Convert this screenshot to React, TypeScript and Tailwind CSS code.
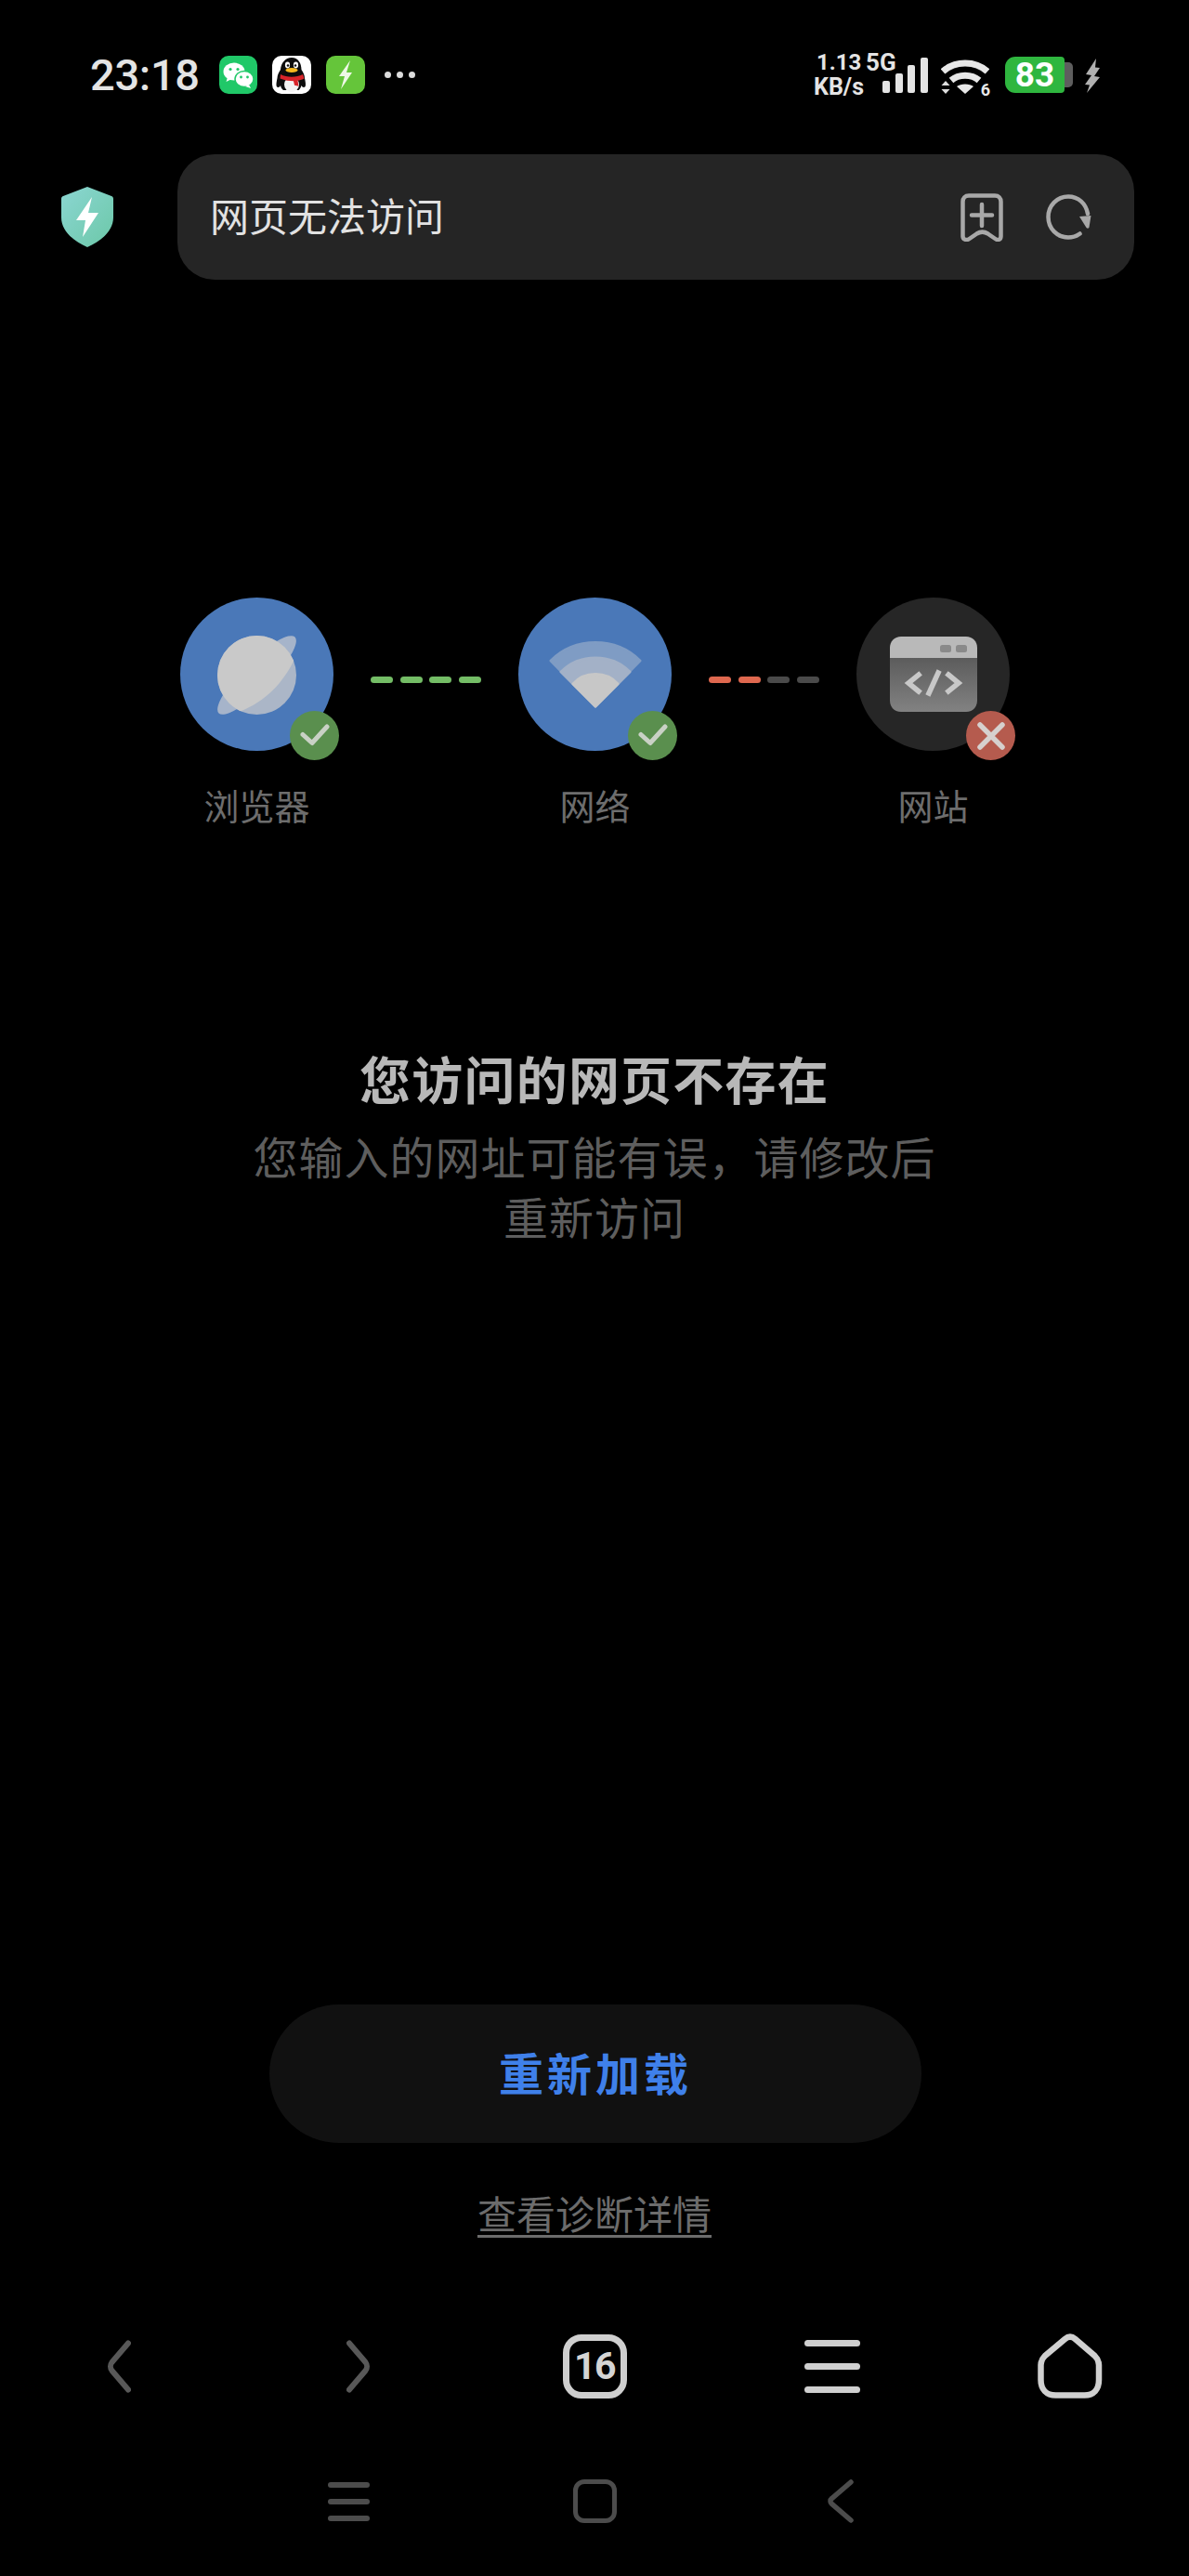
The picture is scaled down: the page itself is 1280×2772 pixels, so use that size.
import React from "react";

const cjk = "font-['Noto_Sans_CJK_SC','Noto_Sans',sans-serif]";
const num = "font-['Roboto','Inter',sans-serif]";

function WeChat() {
  return (
    <svg width="41" height="41" viewBox="0 0 41 41">
      <rect width="41" height="41" rx="10" fill="#20c868" />
      <ellipse cx="16" cy="17" rx="11.5" ry="9.5" fill="#ffffff" />
      <path d="M9 23l-1.5 5 6-3z" fill="#ffffff" />
      <ellipse cx="27" cy="25" rx="10" ry="8.5" fill="#ffffff" stroke="#20c868" strokeWidth="1.5" />
      <path d="M32 31l2 4-6-2z" fill="#ffffff" />
      <circle cx="12" cy="14.5" r="1.6" fill="#20c868" />
      <circle cx="20" cy="14.5" r="1.6" fill="#20c868" />
      <circle cx="23.5" cy="23" r="1.4" fill="#20c868" />
      <circle cx="30.5" cy="23" r="1.4" fill="#20c868" />
    </svg>
  );
}

function QQ() {
  return (
    <svg width="42" height="41" viewBox="0 0 42 41">
      <rect width="42" height="41" rx="10" fill="#ffffff" />
      <path d="M21 2c7 0 10.500 6 10.500 13 2 3 3.500 6 3.500 9 1 5 2 10-1 10-1 0-2-1-2.500-2-1 3-2 4-3 5H12c-1-1-2.500-2-3-5-.5 1-1.500 2-2.500 2-3 0-2-5-1-10 0-3 1.500-6 3.500-9C9.500 8 14 2 21 2z" fill="#0d0d0d" />
      <ellipse cx="21" cy="31" rx="8" ry="8" fill="#f4f4f4" />
      <ellipse cx="16.500" cy="10" rx="2.600" ry="3.400" fill="#ffffff" />
      <ellipse cx="25.500" cy="10" rx="2.600" ry="3.400" fill="#ffffff" />
      <circle cx="17" cy="10.500" r="1.300" fill="#111111" />
      <circle cx="25" cy="10.500" r="1.300" fill="#111111" />
      <ellipse cx="21" cy="15.500" rx="6.500" ry="2.600" fill="#f5b81f" />
      <path d="M9 20c7 3.500 17 3.500 24 0l1.500 4.500c-3 1.500-5 2-7 2.200l1 6-4.500-1-1-4.500c-4 0-9.500-.5-14.500-2.700z" fill="#d8242a" />
    </svg>
  );
}

function Juice() {
  return (
    <svg width="42" height="41" viewBox="0 0 42 41">
      <rect width="42" height="41" rx="10" fill="#65c53a" />
      <path d="M26 5L14 22h6l-4 14 12-18h-6z" fill="#eef8e6" />
    </svg>
  );
}

function Signal() {
  return (
    <svg width="50" height="38" viewBox="0 0 50 38" className="block">
      <rect x="0" y="25" width="8" height="13" rx="2" fill="#e4e4e4" />
      <rect x="14" y="17" width="8" height="21" rx="2" fill="#e4e4e4" />
      <rect x="27" y="8" width="8" height="30" rx="2" fill="#e4e4e4" />
      <rect x="41" y="0" width="8" height="38" rx="2" fill="#e4e4e4" />
    </svg>
  );
}

function Wifi() {
  return (
    <div className="relative w-[52px] h-[38px]">
      <svg width="52" height="38" viewBox="0 0 52 38" className="block">
        <path d="M2 13C15 1 37 1 50 13" fill="none" stroke="#e8e8e8" strokeWidth="7" />
        <path d="M11 22.500C19 15.500 33 15.500 41 22.500" fill="none" stroke="#e8e8e8" strokeWidth="7" />
        <path d="M17 29c4-3.500 14-3.500 18 0l-9 8z" fill="#e8e8e8" />
        <path d="M5 23l-4.500 5h9z" fill="#dddddd" />
        <path d="M5 37l-4.500-5h9z" fill="#dddddd" />
      </svg>
      <span className={`absolute right-[-1px] bottom-[-3px] text-[18px] leading-[17px] font-bold text-[#e8e8e8] ${num}`}>6</span>
    </div>
  );
}

function Battery() {
  return (
    <div className="flex items-center">
      <div className={`w-[64px] h-[39px] rounded-l-[11px] rounded-r-[4px] bg-[#2fb63f] flex items-center justify-center text-[37px] leading-none font-bold text-white ${num}`}>83</div>
      <div className="w-[9px] h-[27px] rounded-r-[5px] bg-[#5e5e5e]" />
    </div>
  );
}

function StatusBolt() {
  return (
    <svg width="18" height="37" viewBox="0 0 18 37" className="block">
      <path d="M13 0L2 17l6 1-7 10 5 .5L3 37l14-17-6-1 6-9-5-.500z" fill="#b0b0b0" />
    </svg>
  );
}

function StatusBar() {
  return (
    <div className="h-[166px] pt-[60px] pl-[97px] flex items-start">
      <span className={`w-[139px] h-[41px] text-[47px] leading-[41px] font-medium text-[#e4e4e4] tracking-[-0.3px] ${num}`}>23:18</span>
      <div className="flex items-center gap-[16px]">
        <WeChat />
        <QQ />
        <Juice />
      </div>
      <div className="ml-[21px] h-[41px] flex items-center gap-[6px]">
        <span className="w-[7px] h-[7px] rounded-full bg-[#dcdcdc]" />
        <span className="w-[7px] h-[7px] rounded-full bg-[#dcdcdc]" />
        <span className="w-[7px] h-[7px] rounded-full bg-[#dcdcdc]" />
      </div>
      <div className="ml-[426px] -mt-[5px] w-[70px] flex flex-col items-start">
        <div className={`w-[96px] flex text-[24px] leading-[24px] font-bold text-[#e4e4e4] pl-[6px] ${num}`}>
          <span className="w-[53px]">1.13</span>
          <span className="text-[26px]">5G</span>
        </div>
        <span className={`text-[25px] leading-[24px] ml-[3px] mt-[3px] font-bold text-[#e4e4e4] ${num}`}>KB/s</span>
      </div>
      <div className="ml-[7px] mt-[2px]"><Signal /></div>
      <div className="ml-[13px] mt-[4px]"><Wifi /></div>
      <div className="ml-[17px] mt-[1px]"><Battery /></div>
      <div className="ml-[12px] mt-[3px]"><StatusBolt /></div>
    </div>
  );
}

function Shield() {
  return (
    <svg width="56" height="65" viewBox="0 0 56 65" className="block">
      <defs>
        <linearGradient id="shieldFill" x1="0" y1="0" x2="1" y2="1">
          <stop offset="0" stopColor="#8bd6d2" />
          <stop offset="1" stopColor="#6cc8a8" />
        </linearGradient>
      </defs>
      <path d="M28 0l26 10c1.500.5 2 1.500 2 3v20c0 15-14 26-28 32C14 59 0 48 0 33V13c0-1.500.5-2.500 2-3z" fill="url(#shieldFill)" />
      <path d="M33 11L16 36h10l-3 18 17-26H29z" fill="#ffffff" />
    </svg>
  );
}

function Bookmark() {
  return (
    <svg width="46" height="52" viewBox="0 0 46 52" className="block">
      <path d="M9 2.500h28c4 0 6.500 2.500 6.500 6.500v37c0 4-3 5-6 3l-8-5.500c-4-2.500-8-2.500-12 0L9.500 49c-3 2-7 1-7-3V9c0-4 2.500-6.500 6.500-6.500z" fill="none" stroke="#a8a8a8" strokeWidth="4.500" strokeLinejoin="round" />
      <path d="M23 12v23M12 23.500h22" fill="none" stroke="#a8a8a8" strokeWidth="4.500" strokeLinecap="round" />
    </svg>
  );
}

function Reload() {
  return (
    <svg width="49" height="49" viewBox="0 0 49 49" className="block">
      <path d="M45 21C43 10 35 2.500 24 2.500 12 2.500 2.500 12 2.500 24.500S12 46.500 24 46.500c5 0 9-1.500 12.500-4" fill="none" stroke="#a8a8a8" strokeWidth="4.500" strokeLinecap="round" />
      <path d="M36 24l12.500-1-2 12.500c-.5 1.500-2 1.500-3 .5z" fill="#a8a8a8" />
    </svg>
  );
}

function Header() {
  return (
    <div className="h-[135px] flex items-center pl-[66px]">
      <Shield />
      <div className="ml-[69px] w-[1030px] h-[135px] rounded-[40px] bg-[#252525] flex items-center pl-[35px]">
        <span className={`w-[808px] pb-[6px] text-[42px] leading-[60px] text-[#e2e2e2] ${cjk}`}>网页无法访问</span>
        <Bookmark />
        <div className="ml-[46px]"><Reload /></div>
      </div>
    </div>
  );
}

function Planet() {
  return (
    <svg width="90" height="90" viewBox="0 0 90 90" className="block">
      <defs>
        <clipPath id="planetClip">
          <circle cx="44.500" cy="45.500" r="42.500" />
        </clipPath>
      </defs>
      <ellipse cx="44.500" cy="45.500" rx="58" ry="15" transform="rotate(-45 44.500 45.500)" fill="#a6b4ca" />
      <circle cx="44.500" cy="45.500" r="42.500" fill="#abb6c7" />
      <path d="M0 0H90V18C76 50 58 74 18 88H0z" fill="#c9c9c9" clipPath="url(#planetClip)" />
    </svg>
  );
}

function WifiArt() {
  return (
    <svg width="104" height="73" viewBox="0 0 104 73" className="block">
      <path d="M4 22C30-4 74-4 100 22L52 71z" fill="#7f9cc4" stroke="#7f9cc4" strokeWidth="3" strokeLinejoin="round" />
      <path d="M15 34C35 14 69 14 89 34L52 71z" fill="#a3b1c7" stroke="#a3b1c7" strokeWidth="3" strokeLinejoin="round" />
      <path d="M28 47C40 33 64 33 76 47L52 71z" fill="#c7c7c7" stroke="#c7c7c7" strokeWidth="3" strokeLinejoin="round" />
    </svg>
  );
}

function Site() {
  return (
    <svg width="94" height="81" viewBox="0 0 94 81" className="block">
      <defs>
        <linearGradient id="siteBody" x1="0" y1="0" x2="0" y2="1">
          <stop offset="0" stopColor="#5c5c5c" />
          <stop offset="1" stopColor="#828282" />
        </linearGradient>
      </defs>
      <path d="M0 23h94v46c0 7-5 12-12 12H12C5 81 0 76 0 69z" fill="url(#siteBody)" />
      <path d="M12 0h70c7 0 12 5 12 12v11H0V12C0 5 5 0 12 0z" fill="#b9b9b9" />
      <rect x="54" y="9" width="12" height="8" rx="2.500" fill="#8a8a8a" />
      <rect x="71" y="9" width="12" height="8" rx="2.500" fill="#8a8a8a" />
      <path d="M31 41L20 50l11 9M63 41l11 9-11 9" fill="none" stroke="#c8c8c8" strokeWidth="5.500" strokeLinecap="square" />
      <path d="M52 39L42 61" fill="none" stroke="#c8c8c8" strokeWidth="5.500" strokeLinecap="square" />
    </svg>
  );
}

function OkBadge() {
  return (
    <div className="absolute left-[118px] top-[122px] w-[53px] h-[53px] rounded-full bg-[#5a8f4e] flex items-center justify-center">
      <svg width="32" height="26" viewBox="0 0 32 26" className="block">
        <path d="M3 11.500l10 9L29 3" fill="none" stroke="#c9d1c5" strokeWidth="5" strokeLinecap="round" strokeLinejoin="round" />
      </svg>
    </div>
  );
}

function FailBadge() {
  return (
    <div className="absolute left-[118px] top-[122px] w-[53px] h-[53px] rounded-full bg-[#b55b4e] flex items-center justify-center">
      <svg width="30" height="30" viewBox="0 0 30 30" className="block">
        <path d="M3 3l24 24M27 3L3 27" fill="none" stroke="#d6d0ce" strokeWidth="5.500" strokeLinecap="round" />
      </svg>
    </div>
  );
}

function Step({ label, bg, art, badge }: { label: string; bg: string; art: React.ReactNode; badge: React.ReactNode }) {
  return (
    <div className="w-[165px] flex flex-col items-center">
      <div className={`relative w-[165px] h-[165px] rounded-full flex items-center justify-center ${bg}`}>
        {art}
        {badge}
      </div>
      <span className={`mt-[34px] text-[38px] leading-[48px] text-[#6d6d6d] ${cjk}`}>{label}</span>
    </div>
  );
}

function Dashes({ colors }: { colors: string[] }) {
  return (
    <div className="w-[119px] mx-[40px] mt-[85px] h-[7px] flex justify-between">
      {colors.map((c, i) => (
        <span key={i} className={`w-[24px] h-[7px] rounded-full ${c}`} />
      ))}
    </div>
  );
}

function Steps() {
  return (
    <div className="mt-[342px] pl-[194px] flex items-start">
      <Step label="浏览器" bg="bg-[#4a78b8]" art={<Planet />} badge={<OkBadge />} />
      <Dashes colors={["bg-[#74bd66]", "bg-[#74bd66]", "bg-[#74bd66]", "bg-[#74bd66]"]} />
      <Step label="网络" bg="bg-[#4a78b8]" art={<WifiArt />} badge={<OkBadge />} />
      <Dashes colors={["bg-[#df684f]", "bg-[#df684f]", "bg-[#4a4a4a]", "bg-[#4a4a4a]"]} />
      <Step label="网站" bg="bg-[#262626]" art={<Site />} badge={<FailBadge />} />
    </div>
  );
}

function Toolbar() {
  return (
    <div className="mt-[105px] h-[70px] grid grid-cols-5 items-center justify-items-center">
      <svg width="26" height="57" viewBox="0 0 26 57" className="block">
        <path d="M23 3.500L5.500 24c-2 2.500-2 6.500 0 9L23 53.500" fill="none" stroke="#585858" strokeWidth="6" strokeLinecap="round" />
      </svg>
      <svg width="26" height="57" viewBox="0 0 26 57" className="block ml-[3px]">
        <path d="M3 3.500L20.500 24c2 2.500 2 6.500 0 9L3 53.500" fill="none" stroke="#585858" strokeWidth="6" strokeLinecap="round" />
      </svg>
      <div className={`w-[69px] h-[69px] rounded-[20px] border-[7px] border-[#cfcfcf] flex items-center justify-center text-[41px] leading-none font-bold tracking-[-1.5px] text-[#d4d4d4] ${num}`}>16</div>
      <div className="w-[60px] flex flex-col gap-[18px]">
        <span className="h-[7px] rounded-full bg-[#cfcfcf]" />
        <span className="h-[7px] rounded-full bg-[#cfcfcf]" />
        <span className="h-[7px] rounded-full bg-[#cfcfcf]" />
      </div>
      <svg width="70" height="70" viewBox="0 0 70 70" className="block">
        <path d="M29.500 6L8 24c-3 3-4.500 6-4.500 10v16c0 10 6 16.500 16 16.500h31c10 0 15.500-6.500 15.500-16.500V34c0-4-1.500-7-4.500-10L40.500 6c-3.500-3-7.500-3-11 0z" fill="none" stroke="#d0d0d0" strokeWidth="6.500" strokeLinejoin="round" />
      </svg>
    </div>
  );
}

function SystemNav() {
  return (
    <div className="mt-[87px] mx-auto w-[795px] h-[47px] grid grid-cols-3 items-center justify-items-center">
      <div className="w-[45px] flex flex-col gap-[12px]">
        <span className="h-[6px] rounded-full bg-[#4c4c4c]" />
        <span className="h-[6px] rounded-full bg-[#4c4c4c]" />
        <span className="h-[6px] rounded-full bg-[#4c4c4c]" />
      </div>
      <div className="w-[47px] h-[47px] rounded-[12px] border-[5px] border-[#4c4c4c]" />
      <svg width="28" height="47" viewBox="0 0 28 47" className="block">
        <path d="M25 3L4.500 20.500c-2 1.500-2 4.500 0 6L25 44" fill="none" stroke="#4c4c4c" strokeWidth="5.500" strokeLinecap="round" />
      </svg>
    </div>
  );
}

export default function App() {
  return (
    <div className="w-[1280px] h-[2772px] bg-black flex flex-col overflow-hidden">
      <StatusBar />
      <Header />
      <Steps />
      <h1 className={`mt-[237px] text-center text-[55px] leading-[64px] font-bold tracking-[1.2px] text-[#b8b8b8] ${cjk}`}>您访问的网页不存在</h1>
      <p className={`mt-[20px] mx-auto w-[760px] text-center text-[48px] leading-[65px] tracking-[1px] text-[#5e5e5e] ${cjk}`}>您输入的网址可能有误，请修改后重新访问</p>
      <div className={`mt-[816px] ml-[290px] w-[702px] h-[149px] pb-[5px] rounded-full bg-[#111111] flex items-center justify-center text-[48px] font-bold tracking-[4px] text-[#3f80ea] ${cjk}`}>重新加载</div>
      <div className={`mt-[50px] text-center text-[42px] leading-[50px] text-[#6c6c6c] underline decoration-[3px] underline-offset-[6px] ${cjk}`}>查看诊断详情</div>
      <Toolbar />
      <SystemNav />
    </div>
  );
}
